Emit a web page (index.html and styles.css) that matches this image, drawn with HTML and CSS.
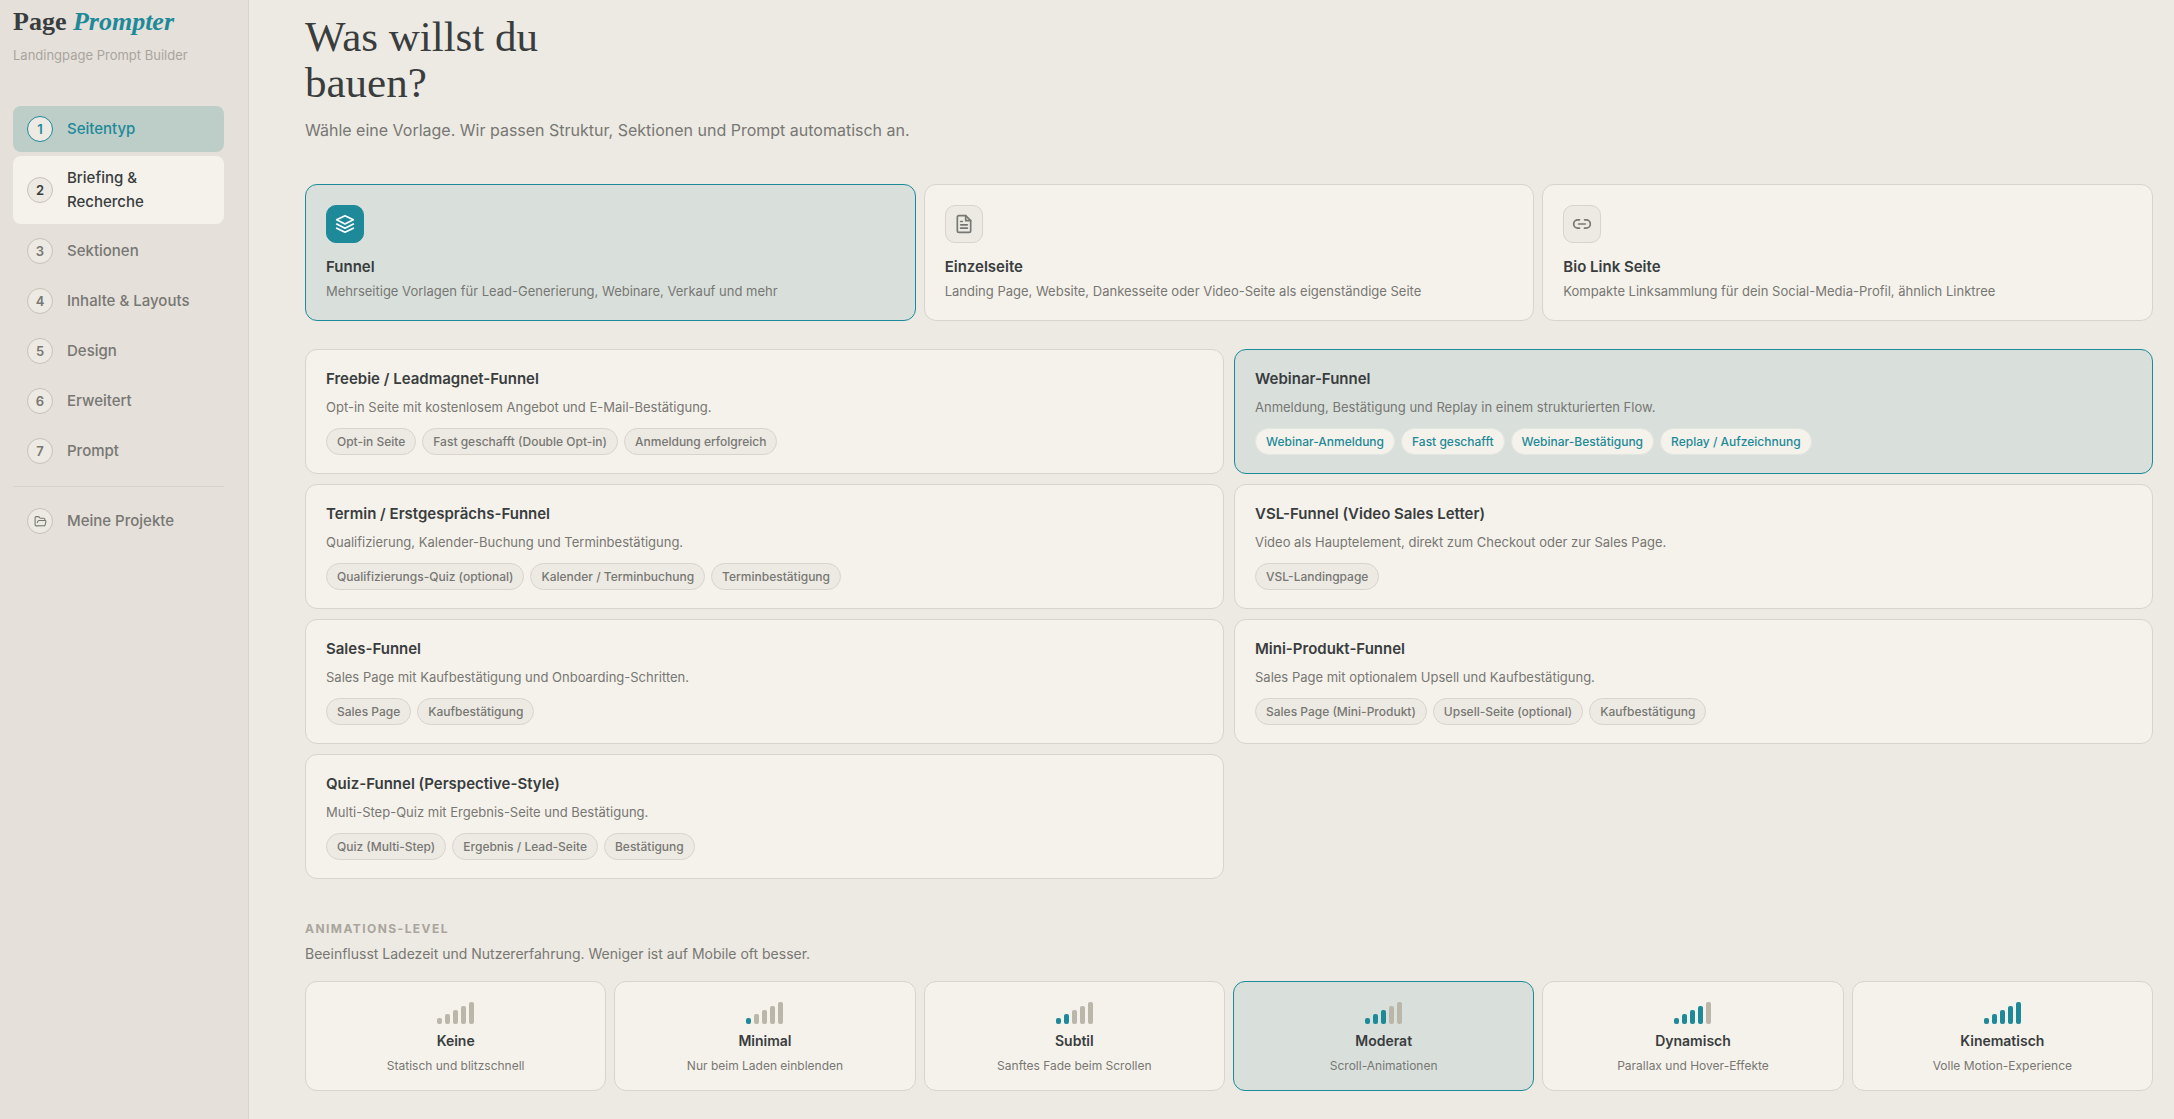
FILE: index.html
```html
<!DOCTYPE html>
<html lang="de">
<head>
    <meta charset="UTF-8">
    <meta name="viewport" content="width=device-width, initial-scale=1.0">
    <title>Page Prompter</title>
    <link rel="stylesheet" href="styles.css">
</head>
<body>
    <div class="app">
        <!-- Seitenleiste -->
        <aside class="sidebar">
            <div class="brand">Page <em>Prompter</em></div>
            <p class="tagline">Landingpage Prompt Builder</p>

            <nav class="steps">
                <button type="button" class="step active"><span class="step-num">1</span><span>Seitentyp</span></button>
                <button type="button" class="step current"><span class="step-num">2</span><span>Briefing &amp; Recherche</span></button>
                <button type="button" class="step"><span class="step-num">3</span><span>Sektionen</span></button>
                <button type="button" class="step"><span class="step-num">4</span><span>Inhalte &amp; Layouts</span></button>
                <button type="button" class="step"><span class="step-num">5</span><span>Design</span></button>
                <button type="button" class="step"><span class="step-num">6</span><span>Erweitert</span></button>
                <button type="button" class="step"><span class="step-num">7</span><span>Prompt</span></button>
            </nav>

            <div class="projects">
                <button type="button" class="step">
                    <span class="step-num">
                        <svg width="13" height="13" viewBox="0 0 24 24"><path d="m6 14 1.5-2.9A2 2 0 0 1 9.24 10H20a2 2 0 0 1 1.94 2.5l-1.54 6a2 2 0 0 1-1.95 1.5H4a2 2 0 0 1-2-2V5a2 2 0 0 1 2-2h3.9a2 2 0 0 1 1.69.9l.81 1.2a2 2 0 0 0 1.67.9H18a2 2 0 0 1 2 2v2"/></svg>
                    </span>
                    <span>Meine Projekte</span>
                </button>
            </div>
        </aside>

        <main class="content">
            <h1>Was willst du<br>bauen?</h1>
            <p class="intro">Wähle eine Vorlage. Wir passen Struktur, Sektionen und Prompt automatisch an.</p>

            <!-- Seitentyp -->
            <div class="type-grid">
                <button type="button" class="card selected">
                    <span class="card-icon">
                        <svg width="20" height="20" viewBox="0 0 24 24"><path d="M12 2 2 7l10 5 10-5-10-5Z"/><path d="m2 17 10 5 10-5"/><path d="m2 12 10 5 10-5"/></svg>
                    </span>
                    <span class="card-title">Funnel</span>
                    <span class="card-text">Mehrseitige Vorlagen für Lead-Generierung, Webinare, Verkauf und mehr</span>
                </button>
                <button type="button" class="card">
                    <span class="card-icon">
                        <svg width="20" height="20" viewBox="0 0 24 24"><path d="M14 2H6a2 2 0 0 0-2 2v16a2 2 0 0 0 2 2h12a2 2 0 0 0 2-2V8Z"/><path d="M14 2v6h6"/><path d="M16 13H8"/><path d="M16 17H8"/><path d="M10 9H8"/></svg>
                    </span>
                    <span class="card-title">Einzelseite</span>
                    <span class="card-text">Landing Page, Website, Dankesseite oder Video-Seite als eigenständige Seite</span>
                </button>
                <button type="button" class="card">
                    <span class="card-icon">
                        <svg width="20" height="20" viewBox="0 0 24 24"><path d="M9 17H7A5 5 0 0 1 7 7h2"/><path d="M15 7h2a5 5 0 1 1 0 10h-2"/><path d="M8 12h8"/></svg>
                    </span>
                    <span class="card-title">Bio Link Seite</span>
                    <span class="card-text">Kompakte Linksammlung für dein Social-Media-Profil, ähnlich Linktree</span>
                </button>
            </div>

            <!-- Funnel-Vorlagen -->
            <div class="funnel-grid">
                <button type="button" class="card">
                    <span class="card-title">Freebie / Leadmagnet-Funnel</span>
                    <span class="card-text">Opt-in Seite mit kostenlosem Angebot und E-Mail-Bestätigung.</span>
                    <span class="tags"><span class="tag">Opt-in Seite</span><span class="tag">Fast geschafft (Double Opt-in)</span><span class="tag">Anmeldung erfolgreich</span></span>
                </button>
                <button type="button" class="card selected">
                    <span class="card-title">Webinar-Funnel</span>
                    <span class="card-text">Anmeldung, Bestätigung und Replay in einem strukturierten Flow.</span>
                    <span class="tags"><span class="tag">Webinar-Anmeldung</span><span class="tag">Fast geschafft</span><span class="tag">Webinar-Bestätigung</span><span class="tag">Replay / Aufzeichnung</span></span>
                </button>
                <button type="button" class="card">
                    <span class="card-title">Termin / Erstgesprächs-Funnel</span>
                    <span class="card-text">Qualifizierung, Kalender-Buchung und Terminbestätigung.</span>
                    <span class="tags"><span class="tag">Qualifizierungs-Quiz (optional)</span><span class="tag">Kalender / Terminbuchung</span><span class="tag">Terminbestätigung</span></span>
                </button>
                <button type="button" class="card">
                    <span class="card-title">VSL-Funnel (Video Sales Letter)</span>
                    <span class="card-text">Video als Hauptelement, direkt zum Checkout oder zur Sales Page.</span>
                    <span class="tags"><span class="tag">VSL-Landingpage</span></span>
                </button>
                <button type="button" class="card">
                    <span class="card-title">Sales-Funnel</span>
                    <span class="card-text">Sales Page mit Kaufbestätigung und Onboarding-Schritten.</span>
                    <span class="tags"><span class="tag">Sales Page</span><span class="tag">Kaufbestätigung</span></span>
                </button>
                <button type="button" class="card">
                    <span class="card-title">Mini-Produkt-Funnel</span>
                    <span class="card-text">Sales Page mit optionalem Upsell und Kaufbestätigung.</span>
                    <span class="tags"><span class="tag">Sales Page (Mini-Produkt)</span><span class="tag">Upsell-Seite (optional)</span><span class="tag">Kaufbestätigung</span></span>
                </button>
                <button type="button" class="card">
                    <span class="card-title">Quiz-Funnel (Perspective-Style)</span>
                    <span class="card-text">Multi-Step-Quiz mit Ergebnis-Seite und Bestätigung.</span>
                    <span class="tags"><span class="tag">Quiz (Multi-Step)</span><span class="tag">Ergebnis / Lead-Seite</span><span class="tag">Bestätigung</span></span>
                </button>
            </div>

            <!-- Animations-Level -->
            <h2>Animations-Level</h2>
            <p class="hint">Beeinflusst Ladezeit und Nutzererfahrung. Weniger ist auf Mobile oft besser.</p>
            <div class="level-grid">
                <button type="button" class="level">
                    <span class="bars"><i></i><i></i><i></i><i></i><i></i></span>
                    <span class="level-title">Keine</span>
                    <span class="level-text">Statisch und blitzschnell</span>
                </button>
                <button type="button" class="level">
                    <span class="bars"><i class="on"></i><i></i><i></i><i></i><i></i></span>
                    <span class="level-title">Minimal</span>
                    <span class="level-text">Nur beim Laden einblenden</span>
                </button>
                <button type="button" class="level">
                    <span class="bars"><i class="on"></i><i class="on"></i><i></i><i></i><i></i></span>
                    <span class="level-title">Subtil</span>
                    <span class="level-text">Sanftes Fade beim Scrollen</span>
                </button>
                <button type="button" class="level selected">
                    <span class="bars"><i class="on"></i><i class="on"></i><i class="on"></i><i></i><i></i></span>
                    <span class="level-title">Moderat</span>
                    <span class="level-text">Scroll-Animationen</span>
                </button>
                <button type="button" class="level">
                    <span class="bars"><i class="on"></i><i class="on"></i><i class="on"></i><i class="on"></i><i></i></span>
                    <span class="level-title">Dynamisch</span>
                    <span class="level-text">Parallax und Hover-Effekte</span>
                </button>
                <button type="button" class="level">
                    <span class="bars"><i class="on"></i><i class="on"></i><i class="on"></i><i class="on"></i><i class="on"></i></span>
                    <span class="level-title">Kinematisch</span>
                    <span class="level-text">Volle Motion-Experience</span>
                </button>
            </div>
        </main>
    </div>
</body>
</html>
```

FILE: styles.css
```css
:root {
    --bg: #edeae3;
    --sidebar: #e5e0da;
    --card: #f5f2eb;
    --line: #d8d4cd;
    --text: #393d3e;
    --muted: #777773;
    --faint: #a9a59e;
    --accent: #1d8999;
    --accent-soft: #d9e0dc;
}

* {
    box-sizing: border-box;
}

body {
    margin: 0;
    background: var(--bg);
    color: var(--text);
    font-family: Inter, sans-serif;
}

button {
    font: inherit;
    color: inherit;
    text-align: left;
    cursor: pointer;
}

svg {
    fill: none;
    stroke: currentColor;
    stroke-width: 2;
    stroke-linecap: round;
    stroke-linejoin: round;
}

.app {
    display: flex;
    min-height: 100vh;
}

/* Seitenleiste */
.sidebar {
    flex: 0 0 249px;
    padding: 6px 24px 24px 13px;
    background: var(--sidebar);
    border-right: 1px solid var(--line);
}

.brand {
    font-family: "Liberation Serif", serif;
    font-size: 26px;
    font-weight: 700;
    line-height: 32px;
}

.brand em {
    color: var(--accent);
}

.tagline {
    margin: 7px 0 41px;
    font-size: 13px;
    line-height: 20px;
    color: var(--faint);
}

.steps {
    display: flex;
    flex-direction: column;
    gap: 4px;
}

.step {
    display: flex;
    align-items: center;
    gap: 14px;
    width: 100%;
    padding: 10px 14px;
    border: none;
    border-radius: 8px;
    background: none;
    color: var(--muted);
    font-size: 15px;
    font-weight: 500;
    line-height: 24px;
}

.step.active {
    background: #bdcec8;
    color: var(--accent);
}

.step.current {
    background: var(--card);
    color: var(--text);
}

.step-num {
    display: flex;
    align-items: center;
    justify-content: center;
    flex: 0 0 26px;
    height: 26px;
    border: 1px solid #c8c2b8;
    border-radius: 50%;
    background: var(--bg);
    font-size: 13px;
    font-weight: 600;
}

.step.active .step-num {
    border-color: var(--accent);
}

.projects {
    margin-top: 12px;
    padding-top: 11px;
    border-top: 1px solid var(--line);
}

/* Inhalt */
.content {
    flex: 1;
    min-width: 0;
    padding: 14px 21px 27px 56px;
}

h1 {
    margin: 0;
    font-family: "Liberation Serif", serif;
    font-size: 43px;
    font-weight: 400;
    line-height: 46px;
}

.intro {
    margin: 11px 0 41px;
    font-size: 16px;
    line-height: 26px;
    color: var(--muted);
}

.type-grid {
    display: grid;
    grid-template-columns: repeat(3, 1fr);
    gap: 8px;
    margin-bottom: 28px;
}

.funnel-grid {
    display: grid;
    grid-template-columns: repeat(2, 1fr);
    gap: 10px;
    margin-bottom: 40px;
}

.card {
    display: flex;
    flex-direction: column;
    align-items: flex-start;
    padding: 20px 20px 19px;
    border: 1px solid var(--line);
    border-radius: 12px;
    background: var(--card);
}

.funnel-grid .card {
    padding: 19px 20px 18px;
}

.card.selected,
.level.selected {
    border-color: var(--accent);
    background: var(--accent-soft);
}

.card-icon {
    display: flex;
    align-items: center;
    justify-content: center;
    width: 38px;
    height: 38px;
    margin-bottom: 14px;
    border: 1px solid var(--line);
    border-radius: 10px;
    background: var(--bg);
    color: var(--muted);
}

.selected .card-icon {
    border-color: var(--accent);
    background: var(--accent);
    color: #fff;
}

.card-title {
    font-size: 15px;
    font-weight: 600;
    line-height: 20px;
}

.card-text {
    margin-top: 4px;
    font-size: 13px;
    line-height: 20px;
    color: var(--muted);
}

.funnel-grid .card-text {
    margin-top: 8px;
}

.tags {
    display: flex;
    flex-wrap: wrap;
    gap: 6px;
    margin-top: 11px;
}

.tag {
    padding: 4px 10px;
    border: 1px solid var(--line);
    border-radius: 20px;
    background: var(--bg);
    color: var(--muted);
    font-size: 12px;
    font-weight: 500;
    line-height: 17px;
}

.selected .tag {
    border-color: #e2e6e0;
    background: var(--card);
    color: var(--accent);
}

/* Animations-Level */
h2 {
    margin: 0;
    font-size: 12px;
    font-weight: 700;
    line-height: 20px;
    letter-spacing: 0.12em;
    text-transform: uppercase;
    color: var(--faint);
}

.hint {
    margin: 4px 0 16px;
    font-size: 14px;
    line-height: 22px;
    color: var(--muted);
}

.level-grid {
    display: grid;
    grid-template-columns: repeat(6, 1fr);
    gap: 8px;
}

.level {
    display: flex;
    flex-direction: column;
    align-items: center;
    padding: 20px 12px 14px;
    border: 1px solid var(--line);
    border-radius: 12px;
    background: var(--card);
}

.bars {
    display: flex;
    align-items: flex-end;
    gap: 3px;
    height: 22px;
}

.bars i {
    width: 5px;
    height: 6px;
    border-radius: 2px;
    background: #bbb6aa;
}

.bars i:nth-child(2) { height: 10px; }
.bars i:nth-child(3) { height: 14px; }
.bars i:nth-child(4) { height: 18px; }
.bars i:nth-child(5) { height: 22px; }

.bars .on {
    background: var(--accent);
}

.level-title {
    margin-top: 6px;
    font-size: 14px;
    font-weight: 600;
    line-height: 22px;
}

.level-text {
    margin-top: 4px;
    font-size: 12px;
    line-height: 20px;
    color: var(--muted);
}
```
